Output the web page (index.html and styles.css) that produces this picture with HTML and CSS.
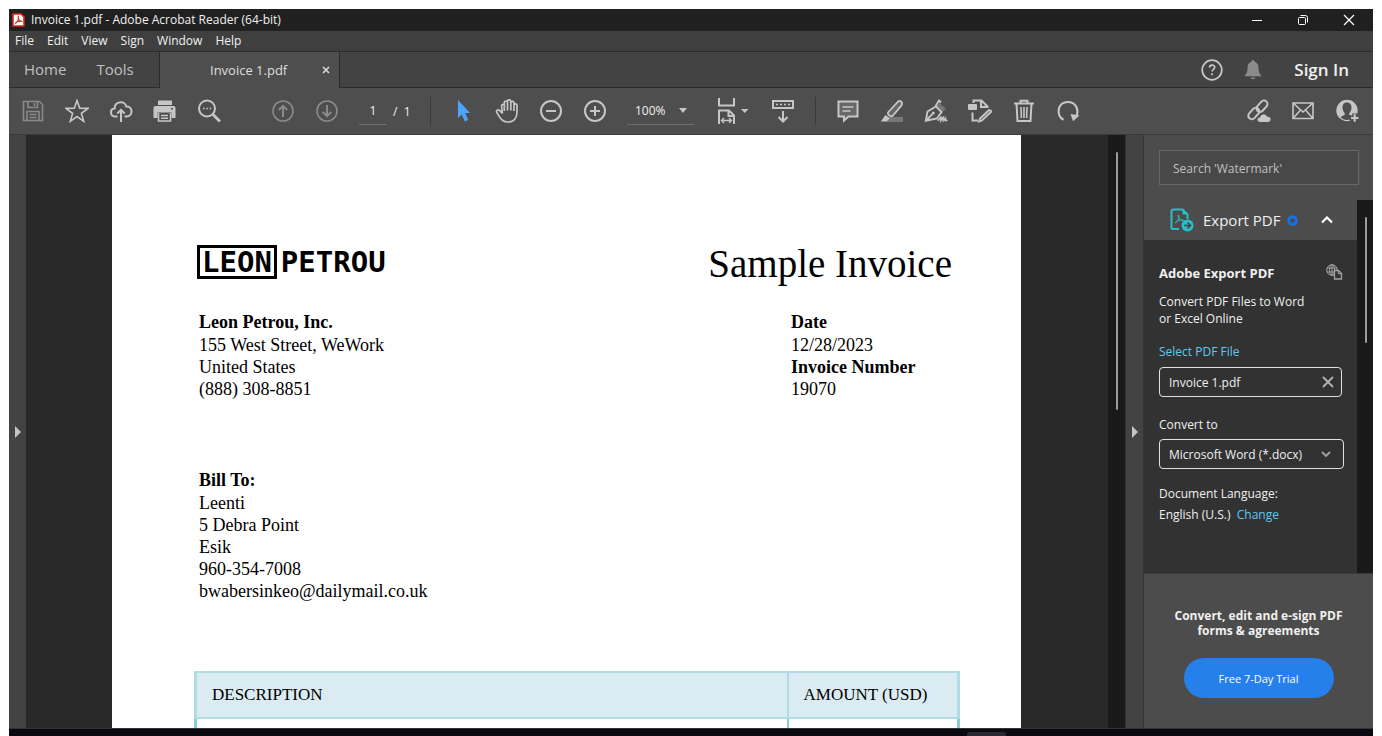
FILE: index.html
```
<!DOCTYPE html>
<html lang="en">
<head>
<meta charset="utf-8">
<title>Invoice 1.pdf - Adobe Acrobat Reader (64-bit)</title>
<link rel="stylesheet" href="styles.css">
</head>
<body>
<div class="window">
  <header class="titlebar">
    <svg class="app-icon" width="13" height="14" viewBox="0 0 13 14"><path d="M1 1h8l3 3v9H1z" fill="#fff" stroke="#e2231a" stroke-width="1.600" stroke-linejoin="round"/><path d="M3 10.500c3-1.500 4-5 3.300-7C5.500 5 7.500 8.500 10.300 8.500 8 7.800 5 8.500 3 10.500z" fill="none" stroke="#e2231a" stroke-width="1.100"/></svg>
    <span class="title">Invoice 1.pdf - Adobe Acrobat Reader (64-bit)</span>
    <button class="win-btn" aria-label="Minimize"><svg width="12" height="12" viewBox="0 0 12 12"><path d="M1 6.500h10" stroke="#fff"/></svg></button>
    <button class="win-btn" aria-label="Restore"><svg width="12" height="12" viewBox="0 0 12 12" fill="none" stroke="#fff"><rect x="1.500" y="3.500" width="7" height="7" rx="1"/><path d="M3.500 1.500h5a2 2 0 0 1 2 2v5"/></svg></button>
    <button class="win-btn" aria-label="Close"><svg width="12" height="12" viewBox="0 0 12 12"><path d="M1 1l10 10M11 1L1 11" stroke="#fff" stroke-width="1.200"/></svg></button>
  </header>

  <nav class="menubar">
    <button>File</button><button>Edit</button><button>View</button><button>Sign</button><button>Window</button><button>Help</button>
  </nav>

  <div class="tabs">
    <div class="tabs-main"><button>Home</button><button>Tools</button></div>
    <div class="tab-active"><span>Invoice 1.pdf</span><button aria-label="Close tab"><svg width="8" height="8" viewBox="0 0 8 8"><path d="M1 1l6 6M7 1L1 7" stroke="#d6d6d6" stroke-width="1.700"/></svg></button></div>
    <div class="tabs-rest">
      <button aria-label="Help"><svg width="22" height="22" viewBox="0 0 22 22" fill="none" stroke="#c6c6c6" stroke-width="1.700"><circle cx="11" cy="11" r="9.800"/><path d="M8.500 8.600c0-3.400 5.200-3.200 5.200-.3 0 2-2.600 2-2.600 4.300M11.100 14.300v2"/></svg></button>
      <button aria-label="Notifications"><svg width="18" height="20" viewBox="0 0 18 20" fill="#8b8b8b"><path d="M9 0a1.600 1.600 0 0 1 1.600 1.700C13.500 2.500 14.500 5 14.500 8c0 4 .8 5.500 2.700 7.300v.9H.8v-.9C2.700 13.500 3.500 12 3.500 8c0-3 1-5.500 3.900-6.300A1.600 1.600 0 0 1 9 0zM6.500 17.500h5c-.6 2-4.400 2-5 0z"/></svg></button>
      <button class="sign-in">Sign In</button>
    </div>
  </div>

  <div class="toolbar">
    <div class="tools">
      <button class="tool dim" aria-label="Save"><svg viewBox="0 0 24 24"><path d="M2.500 2.500h16l3 3v16h-19zM7 2.500v6h9.500v-6M13.500 4v3M6 21.500v-9h12v9M8.500 15.500h7M8.500 18.500h7"/></svg></button>
      <button class="tool" aria-label="Star"><svg viewBox="0 0 24 24"><path d="M12 1.500l2.700 7.700 8.300.2-6.600 5 2.300 7.900-6.700-4.700-6.700 4.700 2.300-7.900-6.600-5 8.300-.2z"/></svg></button>
      <button class="tool" aria-label="Upload"><svg viewBox="0 0 24 24"><path d="M8.500 17.500H6.500C.8 17.500.6 10 5.600 9.600 5.500 2.500 15.800.8 17.300 7.500c7-.5 7 10 0 10h-1.800M12 23V11.500M8.300 14.500L12 10.800l3.700 3.700" stroke-width="2"/></svg></button>
      <button class="tool" aria-label="Print"><svg viewBox="0 0 24 24"><path d="M5 6V1.500h14V6z" fill="currentColor" stroke="none"/><path fill="currentColor" stroke="none" d="M2.500 7h18a2 2 0 0 1 2 2v10h-4v-5.500h-14V19h-4V9a2 2 0 0 1 2-2zM20 9h-2v1.600h2z" fill-rule="evenodd"/><path d="M5.500 14v8h12v-8M8 16.500h7M8 19.200h7" stroke-width="1.600"/></svg></button>
      <button class="tool" aria-label="Find"><svg viewBox="0 0 24 24"><circle cx="10" cy="9.500" r="8" stroke-width="2"/><path d="M16 15.500l7 7" stroke-width="3"/><path d="M6 9.500h1.600M9.300 9.500h1.600M12.600 9.500h1.600" stroke-width="1.700"/></svg></button>
    </div>
    <div class="tools after-find">
      <button class="tool dim" aria-label="Previous page"><svg viewBox="0 0 24 24"><circle cx="12" cy="12" r="10"/><path d="M12 18V7M7.800 11L12 6.800l4.200 4.200" stroke-width="2"/></svg></button>
      <button class="tool dim" aria-label="Next page"><svg viewBox="0 0 24 24"><circle cx="12" cy="12" r="10"/><path d="M12 6v11M7.800 13l4.200 4.200 4.200-4.200" stroke-width="2"/></svg></button>
    </div>
    <div class="pager"><input type="text" value="1" aria-label="Page number"><span>/&nbsp; 1</span></div>
    <div class="sep"></div>
    <div class="tools">
      <button class="tool active" aria-label="Select"><svg viewBox="0 0 24 24"><path fill="currentColor" stroke="none" d="M7 1l12 13h-4.800l3 7-3.400 1.500-3-7L7 19z"/></svg></button>
      <button class="tool" aria-label="Hand"><svg viewBox="0 0 24 24"><path stroke-width="1.700" d="M7.500 14.500L5 11.800C3 9.800.4 11.500 2 13.700c2.500 4 4.500 9.300 10.500 9.300 7 0 9.500-5 9.500-10V6.500c0-2.300-3-2.300-3 0V12 4c0-2.300-3.200-2.300-3.200 0v7.500V2.500c0-2.300-3.300-2.300-3.300 0v9V3.800c0-2.300-3.200-2.300-3.200 0V12 7c0-2.300-2.800-2.300-2.800 0l1 7.500"/></svg></button>
      <button class="tool" aria-label="Zoom out"><svg viewBox="0 0 24 24"><circle cx="12" cy="12" r="10" stroke-width="2"/><path d="M7 12h10" stroke-width="2"/></svg></button>
      <button class="tool" aria-label="Zoom in"><svg viewBox="0 0 24 24"><circle cx="12" cy="12" r="10" stroke-width="2"/><path d="M7 12h10M12 7v10" stroke-width="2"/></svg></button>
    </div>
    <div class="zoom"><select aria-label="Zoom level"><option>100%</option></select><svg width="8" height="5" viewBox="0 0 8 5"><path d="M0 0h8L4 5z" fill="#c6c6c6"/></svg></div>
    <div class="tools after-zoom">
      <button class="tool wide" aria-label="Fit width"><svg class="wide-icon" viewBox="0 0 32 26"><path d="M2 0v7.500h15V0M2 26V12.500h10l5 5V26M11.500 12.500v5.500H17" stroke-width="2"/><path d="M4.500 22.500h10M7 20l-2.500 2.500L7 25M12 20l2.500 2.500L12 25" stroke-width="1.400"/><path d="M24 11h7.500l-3.750 4z" fill="currentColor" stroke="none"/></svg></button>
      <button class="tool" aria-label="Reading mode"><svg viewBox="0 0 24 24"><rect x="2" y="2" width="20" height="7" stroke-width="2"/><path d="M5 5.500h14" stroke-dasharray="2 2"/><path d="M12 12v10M7.500 18l4.500 4.500 4.500-4.500" stroke-width="2"/></svg></button>
    </div>
    <div class="sep"></div>
    <div class="tools">
      <button class="tool" aria-label="Comment"><svg viewBox="0 0 24 24"><path d="M2.500 2.500h19v15h-9l-4.500 4v-4H2.500z" fill="#686868" stroke-width="2"/><path d="M6.500 8h11M6.500 12h8" stroke-width="1.500"/></svg></button>
      <button class="tool" aria-label="Highlight"><svg viewBox="0 0 24 24"><path d="M10 18h13v5H6z" fill="#777" stroke="none"/><path d="M8 13.500L17.500 3.200c3-2.700 5.800.2 4 3.200L12.500 17c-2 1-5-1.200-4.500-3.500z" fill="#686868" stroke-width="1.800"/><path d="M5.500 16l4.500 3.300-3.500 3.200H.8z" fill="currentColor" stroke="none"/></svg></button>
      <button class="tool" aria-label="Sign document"><svg viewBox="0 0 24 24"><path d="M15.500 4l6.500 6-3.500 3-6-6z" fill="#777" stroke="none"/><path d="M1.800 21.800L3.500 12.500 12 7.500l5.500 5.500-4.500 6.500zM1.800 21.800l6.700-7M11.500 7.300L15 1.500l2 2" stroke-width="1.900"/><circle cx="9.300" cy="14" r="1.500" fill="currentColor" stroke="none"/><path d="M13.500 21.500c3-1 3-5 4-3l-.5 3 2.500-3v3l2-2v2h2"/></svg></button>
      <button class="tool" aria-label="Fill and sign"><svg viewBox="0 0 24 24"><path d="M5.500 4V1.500h8l6 6V9M13 2v6h6M4.500 13.500v8H10" stroke-width="2"/><rect x="0" y="5" width="9" height="6" rx="1" fill="currentColor" stroke="none"/><path d="M22.500 11.500l1 1-9.500 9-3 1 1-3 9-8.500z" fill="#686868" stroke-width="1.800"/></svg></button>
      <button class="tool" aria-label="Delete"><svg viewBox="0 0 24 24"><path d="M2 4.500h20M8.500 4V1.800h7V4" stroke-width="2"/><path d="M4.500 5l1 17h13l1-17" stroke-width="2"/><path d="M9 8l.4 11M12 8v11M15 8l-.4 11" stroke-width="1.600"/></svg></button>
      <button class="tool" aria-label="Rotate"><svg viewBox="0 0 24 24"><path d="M7.500 20.800C-.5 16.500 1.500 3 12 3c7.500 0 10.800 7 8.700 13.500" stroke-width="2.200"/><path d="M14.500 15l9 1.500-6.500 5.800z" fill="currentColor" stroke="none"/></svg></button>
    </div>
    <div class="tools push">
      <button class="tool" aria-label="Share link"><svg viewBox="0 0 24 24"><g stroke-width="2"><rect x="8.500" y="3.700" width="13" height="7" rx="3.500" transform="rotate(-48 15 7.200)"/><rect x=".3" y="11" width="13" height="7" rx="3.500" transform="rotate(-48 6.800 14.500)"/></g><path d="M13.500 23.500c-4.500 0-4.500-5-.8-5.300.5-4 6.500-4.300 7.500-1 5-.2 5.300 6.300.5 6.300z" fill="currentColor" stroke="#4e4e4e" stroke-width="1"/></svg></button>
      <button class="tool" aria-label="Email"><svg viewBox="0 0 24 24"><path d="M2 4h20v15.500H2zM2 4l10 9 10-9M2 19.500l7.500-8.500M22 19.500L14.500 11" stroke-width="1.600"/></svg></button>
      <button class="tool" aria-label="Add people"><svg viewBox="0 0 24 24"><circle cx="12" cy="11.500" r="10.700" fill="currentColor" stroke="none"/><path d="M12 3.500c3.200 0 4.500 2.200 4.500 5 0 2.500-1 4.200-2.200 5.500v1.800l4.200 2.200c-3 4-10 4-13 0l4.200-2.200V14C8.500 12.700 7.500 11 7.500 8.500c0-2.800 1.300-5 4.500-5z" fill="#4e4e4e" stroke="none"/><path d="M14.500 19h9.500M19.700 14.500V24" stroke="#4e4e4e" stroke-width="5"/><path d="M16 19h7.500M19.700 15.300v7.500" stroke-width="2.200"/></svg></button>
    </div>
  </div>

  <div class="workspace">
    <button class="rail rail-left" aria-label="Show navigation pane"><svg width="6" height="12" viewBox="0 0 6 12"><path d="M0 0l6 6-6 6z" fill="#c6c6c6"/></svg></button>
    <main class="canvas">
      <article class="page">
        <div class="page-head">
          <div class="logo"><span class="logo-box">LEON</span><span class="logo-rest">PETROU</span></div>
          <h1>Sample Invoice</h1>
        </div>
        <div class="meta">
          <div class="lines"><strong>Leon Petrou, Inc.</strong><span>155 West Street, WeWork</span><span>United States</span><span>(888) 308-8851</span></div>
          <div class="lines date"><strong>Date</strong><span>12/28/2023</span><strong>Invoice Number</strong><span>19070</span></div>
        </div>
        <div class="lines bill"><strong>Bill To:</strong><span>Leenti</span><span>5 Debra Point</span><span>Esik</span><span>960-354-7008</span><span>bwabersinkeo@dailymail.co.uk</span></div>
        <table>
          <thead><tr><th>DESCRIPTION</th><th class="amount">AMOUNT (USD)</th></tr></thead>
          <tbody><tr><td></td><td></td></tr></tbody>
        </table>
      </article>
    </main>
    <div class="scroll doc-scroll"><div class="thumb"></div></div>
    <button class="rail rail-right" aria-label="Hide tools pane"><svg width="6" height="12" viewBox="0 0 6 12"><path d="M0 0l6 6-6 6z" fill="#c6c6c6"/></svg></button>

    <aside class="side">
      <div class="search"><input type="text" placeholder="Search 'Watermark'" aria-label="Search tools"></div>
      <div class="side-mid">
        <div class="side-main">
          <button class="export-head">
            <svg width="24" height="24" viewBox="0 0 24 24"><path d="M9 21H3a1.500 1.500 0 0 1-1.500-1.500V3A1.500 1.500 0 0 1 3 1.500h9.500l5 5V11" fill="none" stroke="#29bec8" stroke-width="2"/><path d="M12.500 1.500v5h5z" fill="#29bec8"/><path d="M5 15c3-1.500 5-6 3.500-8-1.500 0 1 6 5 5.200C10 11.500 7.500 12.500 5 15z" fill="none" stroke="#29bec8"/><circle cx="17.500" cy="17.500" r="6" fill="#29bec8"/><path d="M14 17.500h6M17.500 14.500l3 3-3 3" fill="none" stroke="#444" stroke-width="1.700"/></svg>
            <span>Export PDF</span>
            <svg class="badge" width="11" height="11" viewBox="0 0 11 11"><circle cx="5.500" cy="5.500" r="5.200" fill="#1473e6"/><path d="M5.500 2.300l.9 2.200 2.300.2-1.700 1.500.5 2.300-2-1.200-2 1.200.5-2.300-1.700-1.500 2.300-.2z" fill="#484848"/></svg>
            <svg class="chev" width="12" height="8" viewBox="0 0 12 8"><path d="M1 6.500l5-5 5 5" fill="none" stroke="#fff" stroke-width="2.200"/></svg>
          </button>
          <section class="export">
            <div class="export-title"><h2>Adobe Export PDF</h2>
              <svg width="17" height="17" viewBox="0 0 17 17" fill="none" stroke="#a4a4a4"><circle cx="6" cy="6" r="5.300"/><ellipse cx="6" cy="6" rx="2.500" ry="5.300"/><path d="M1 4h10M1 8h10M6 1v10"/><path d="M8.500 6.500h4l3 3v5.500h-7z" fill="#323232" stroke-width="1.300"/><path d="M12.300 6.500v3.200h3.200"/></svg></div>
            <p>Convert PDF Files to Word<br>or Excel Online</p>
            <label class="link" for="pdf-file">Select PDF File</label>
            <div class="field"><input id="pdf-file" type="text" value="Invoice 1.pdf"><button aria-label="Clear file"><svg width="12" height="12" viewBox="0 0 12 12"><path d="M1 1l10 10M11 1L1 11" stroke="#b4b4b4" stroke-width="1.800"/></svg></button></div>
            <label class="convert" for="format">Convert to</label>
            <div class="field pick"><select id="format"><option>Microsoft Word (*.docx)</option></select><svg width="10" height="7" viewBox="0 0 10 7"><path d="M1 1l4 4 4-4" fill="none" stroke="#a4a4a4" stroke-width="1.800"/></svg></div>
            <p class="lang">Document Language:<br>English (U.S.)&nbsp; <a href="#">Change</a></p>
          </section>
        </div>
        <div class="scroll side-scroll"><div class="thumb"></div></div>
      </div>
      <div class="promo"><p>Convert, edit and e-sign PDF<br>forms &amp; agreements</p><button>Free 7-Day Trial</button></div>
    </aside>
  </div>
</div>
<footer class="taskbar"><div class="taskbar-item"></div></footer>
</body>
</html>
```
FILE: styles.css
```
* { box-sizing: border-box; }
body {
  margin: 0;
  padding: 9px 9px 0;
  height: 100vh;
  display: flex;
  flex-direction: column;
  overflow: hidden;
  background: #fff;
  color: #f0f0f0;
  font: 12px/17px "Open Sans", "Noto Sans", sans-serif;
}
button, input, select { font: inherit; color: inherit; background: none; border: 0; padding: 0; margin: 0; border-radius: 0; }
h1, h2, p { margin: 0; font-weight: normal; }
svg { display: block; flex: none; }
.window { flex: 1; min-height: 0; display: flex; flex-direction: column; background: #4e4e4e; }

.titlebar { flex: none; height: 22px; display: flex; align-items: center; background: #202020; padding: 0 1px 1px 3px; }
.title { flex: 1; padding-left: 6px; white-space: nowrap; }
.win-btn { width: 46px; height: 20px; display: grid; place-items: center; }

.menubar { flex: none; height: 21px; display: flex; align-items: center; gap: 13px; padding: 0 0 2px 6px; background: #3f3f3f; border-bottom: 1px solid #2b2b2b; }

.tabs { flex: none; height: 36px; display: flex; background: #434343; font-size: 15px; color: #c0c0c0; }
.tabs-main { width: 151px; display: flex; align-items: center; gap: 30px; padding-left: 15px; border-right: 1px solid #2b2b2b; border-bottom: 1px solid #2b2b2b; }
.tab-active { width: 180px; display: flex; align-items: center; padding-left: 50px; justify-content: space-between; padding-right: 9px; background: #4e4e4e; border-right: 1px solid #2b2b2b; color: #dedede; font-size: 13px; }
.tabs-rest { flex: 1; display: flex; align-items: center; justify-content: flex-end; gap: 21px; padding-right: 24px; border-bottom: 1px solid #2b2b2b; }
.sign-in { color: #f0f0f0; font-size: 17px; font-weight: 600; padding-left: 11px; }

.toolbar { flex: none; height: 47px; display: flex; align-items: center; padding: 0 4px 0 2px; border-bottom: 1px solid #3a3a3a; color: #c6c6c6; }
.tools { display: flex; }
.after-find { margin-left: 30px; }
.after-zoom { margin-left: 17px; gap: 6px; }
.push { margin-left: auto; }
.tool { width: 44px; height: 46px; display: grid; place-items: center; }
.tool svg { width: 24px; height: 24px; fill: none; stroke: currentColor; stroke-width: 1.6; }
.tool .wide-icon { width: 32px; height: 26px; }
.tool.dim { color: #8a8a8a; }
.tool.active { color: #4aa5ff; }
.pager { display: flex; align-items: center; gap: 6px; width: 61px; margin-left: 10px; color: #f0f0f0; }
.pager input { width: 28px; height: 28px; text-align: center; border-bottom: 1px solid #6e6e6e; }
.pager span { white-space: nowrap; }
.sep { width: 1px; height: 28px; background: #393939; margin: 0 10px; }
.zoom { width: 67px; height: 28px; margin-left: 10px; display: grid; align-items: center; border-bottom: 1px solid #6e6e6e; color: #f0f0f0; }
.zoom > * { grid-area: 1 / 1; }
.zoom select { appearance: none; width: 100%; padding-left: 8px; }
.zoom svg { justify-self: end; margin-right: 7px; pointer-events: none; }

.workspace { flex: 1; min-height: 0; display: flex; }
.rail { flex: none; display: grid; place-items: center; background: #434343; }
.rail-left { width: 17px; }
.rail-right { width: 19px; border-left: 1px solid #333; border-right: 1px solid #363636; }
.canvas { flex: 1; min-width: 0; overflow: hidden; padding: 0 87px 0 86px; background: #292929; }
.scroll { background: #191919; }
.doc-scroll { width: 17px; padding: 17px 7px 0 8px; }
.thumb { background: #9b9b9b; border-radius: 1px; }
.doc-scroll .thumb { height: 258px; }

.page { min-height: 100%; padding: 100px 61px 0 82px; background: #fff; color: #000; font: 18px/22px "Liberation Serif", serif; }
.page-head { display: flex; justify-content: space-between; align-items: flex-start; height: 59px; padding: 0 8px 0 3px; }
.logo { display: flex; align-items: center; gap: 4px; margin-top: 10px; font: bold 29px/28px "DejaVu Sans Mono", monospace; }
.logo-box { border: 3px solid #000; height: 34px; padding: 0 2px; }
h1 { font-size: 39px; line-height: 58px; }
.lines { display: flex; flex-direction: column; padding-left: 5px; }
.lines strong:first-child { margin-bottom: 1px; }
.meta { display: flex; justify-content: space-between; margin-top: 17px; }
.date { width: 169px; padding-left: 0; }
.bill { margin-top: 69px; }
.page table { width: 100%; margin-top: 69px; border-collapse: collapse; table-layout: fixed; font-size: 17px; }
.page th { height: 46px; padding: 0 15px; text-align: left; font-weight: normal; background: #daecf2; border: 2px solid #b2dce5; }
.page td { height: 44px; border: 2px solid #8ccbd8; }
.page tr > :first-child { border-left-width: 3px; }
.page tr > :last-child { border-right-width: 3px; }
.page .amount { width: 171px; }

.side { flex: none; width: 229px; display: flex; flex-direction: column; background: #4c4c4c; }
.search { padding: 15px 14px 15px 15px; }
.search input { width: 100%; height: 35px; padding: 1px 13px 0; background: #484848; border: 1px solid #666; }
.search input::placeholder { color: #c0c0c0; opacity: 1; }
.side-mid { flex: 1; min-height: 0; display: flex; }
.side-main { flex: 1; display: flex; flex-direction: column; }
.side-scroll { width: 16px; padding: 17px 6px 0 8px; }
.side-scroll .thumb { height: 126px; }
.export-head { height: 40px; display: flex; align-items: center; padding: 0 24px 0 26px; font-size: 15px; }
.export-head span { padding: 0 7px 0 9px; white-space: nowrap; }
.chev { margin-left: auto; }
.export { flex: 1; background: #323232; padding: 24px 13px 0 15px; }
.export-title { display: flex; justify-content: space-between; align-items: flex-start; padding-right: 1px; margin-bottom: 11px; }
h2 { font-size: 13px; font-weight: bold; line-height: 18px; }
.link, .convert { display: block; }
.link, .lang a { color: #5fc9f3; text-decoration: none; }
.link { margin: 16px 0 7px; }
.field { height: 30px; width: 183px; display: flex; align-items: center; border: 1px solid #e0e0e0; border-radius: 4px; padding: 0 7px 0 9px; }
.field input { flex: 1; min-width: 0; }
.convert { margin: 19px 0 6px; }
.pick { width: 185px; padding-right: 12px; }
.pick select { flex: 1; min-width: 0; appearance: none; padding-top: 1px; }
.lang { margin-top: 14px; line-height: 21px; }
.promo { flex: none; height: 155px; padding-top: 34px; border-top: 1px solid #3a3a3a; display: flex; flex-direction: column; align-items: center; gap: 20px; text-align: center; line-height: 15px; }
.promo p { font-size: 12px; font-weight: bold; white-space: nowrap; }
.promo button { width: 150px; height: 40px; border-radius: 20px; background: #2680eb; color: #fff; font-size: 11px; }

.taskbar { flex: none; height: 8px; display: flex; justify-content: flex-end; align-items: flex-end; padding-right: 367px; background: #0b0a12; border-top: 1px solid #333; }
.taskbar-item { width: 39px; height: 4px; background: #2a2832; border-radius: 3px 3px 0 0; }
```
